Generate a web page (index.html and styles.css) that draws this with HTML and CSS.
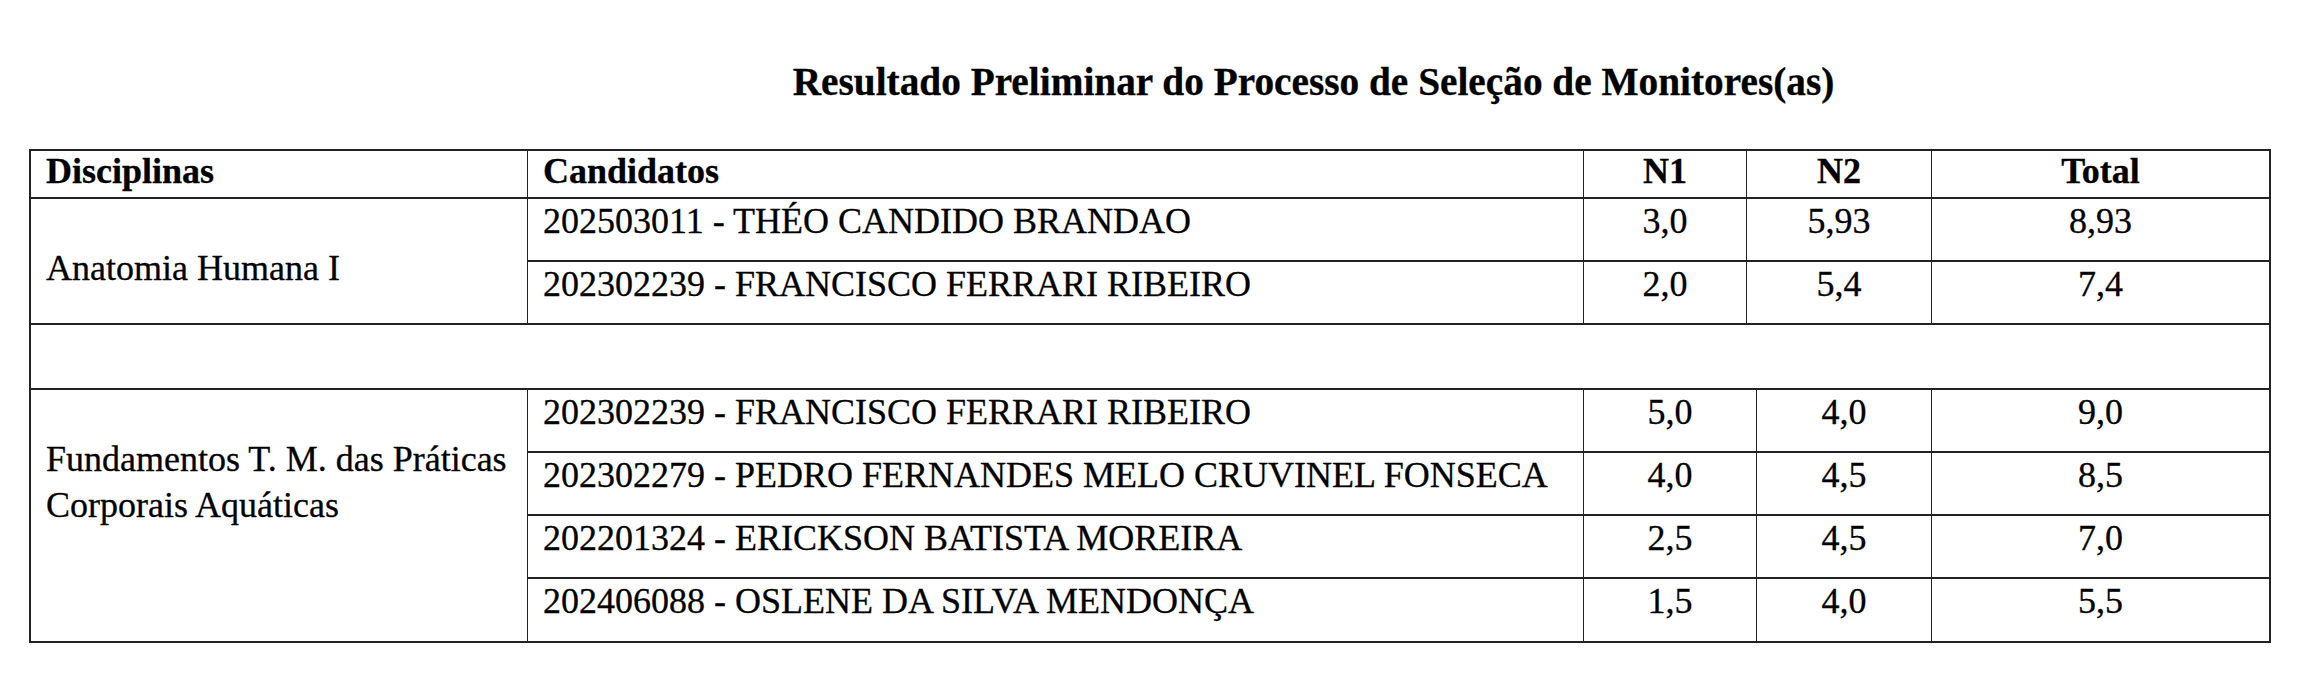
FILE: index.html
```html
<!DOCTYPE html>
<html lang="pt-BR">
<head>
<meta charset="utf-8">
<title>Resultado Preliminar do Processo de Seleção de Monitores(as)</title>
<link rel="stylesheet" href="styles.css">
</head>
<body>
<div class="page">
  <h1 class="title">Resultado Preliminar do Processo de Seleção de Monitores(as)</h1>
  <div class="sheet">
    <div class="grid upper">
      <div class="cell head">Disciplinas</div>
      <div class="cell head">Candidatos</div>
      <div class="cell head num">N1</div>
      <div class="cell head num">N2</div>
      <div class="cell head num last">Total</div>

      <div class="cell disc span2">Anatomia Humana I</div>
      <div class="cell">202503011 - THÉO CANDIDO BRANDAO</div>
      <div class="cell num">3,0</div>
      <div class="cell num">5,93</div>
      <div class="cell num last">8,93</div>

      <div class="cell">202302239 - FRANCISCO FERRARI RIBEIRO</div>
      <div class="cell num">2,0</div>
      <div class="cell num">5,4</div>
      <div class="cell num last">7,4</div>
    </div>

    <div class="gap"></div>

    <div class="grid lower">
      <div class="cell disc span4">Fundamentos T. M. das Práticas<br>Corporais Aquáticas</div>
      <div class="cell">202302239 - FRANCISCO FERRARI RIBEIRO</div>
      <div class="cell num">5,0</div>
      <div class="cell num">4,0</div>
      <div class="cell num last">9,0</div>

      <div class="cell">202302279 - PEDRO FERNANDES MELO CRUVINEL FONSECA</div>
      <div class="cell num">4,0</div>
      <div class="cell num">4,5</div>
      <div class="cell num last">8,5</div>

      <div class="cell">202201324 - ERICKSON BATISTA MOREIRA</div>
      <div class="cell num">2,5</div>
      <div class="cell num">4,5</div>
      <div class="cell num last">7,0</div>

      <div class="cell">202406088 - OSLENE DA SILVA MENDONÇA</div>
      <div class="cell num">1,5</div>
      <div class="cell num">4,0</div>
      <div class="cell num last">5,5</div>
    </div>
  </div>
</div>
</body>
</html>
```

FILE: styles.css
```css
html, body {
  margin: 0;
  padding: 0;
  background: #ffffff;
}

body {
  font-family: "Liberation Serif", "Times New Roman", Times, serif;
  color: #000000;
  -webkit-text-stroke: 0.3px #000000;
}

.page {
  width: 2300px;
  padding-top: 60px;
}

.title {
  margin: 0 0 45px 0;
  padding-left: 327px;
  font-size: 39.3px;
  line-height: 44px;
  font-weight: bold;
  text-align: center;
}

.sheet {
  margin-left: 29px;
  width: 2242px;
  box-sizing: border-box;
  border-top: 2px solid #222222;
  border-left: 2px solid #222222;
  border-right: 2px solid #222222;
}

.grid {
  display: grid;
  font-size: 36px;
}

.upper {
  grid-template-columns: 497px 1056px 163px 185px 337px;
  grid-template-rows: 48px 63px 63px;
}

.lower {
  grid-template-columns: 497px 1056px 173px 175px 337px;
  grid-template-rows: 63px 63px 63px 64px;
}

.cell {
  box-sizing: border-box;
  border-right: 1px solid #222222;
  border-bottom: 2px solid #222222;
  padding: 0 15px;
  line-height: 44px;
  white-space: nowrap;
}

.cell.last {
  border-right: none;
}

.cell.head {
  font-weight: bold;
  line-height: 40px;
}

.cell.num {
  text-align: center;
  padding: 0;
}

.cell.disc {
  padding-top: 45.5px;
  line-height: 46.8px;
}

.span2 {
  grid-row: span 2;
}

.span4 {
  grid-row: span 4;
}

.gap {
  height: 65px;
  box-sizing: border-box;
  border-bottom: 2px solid #222222;
}
```
